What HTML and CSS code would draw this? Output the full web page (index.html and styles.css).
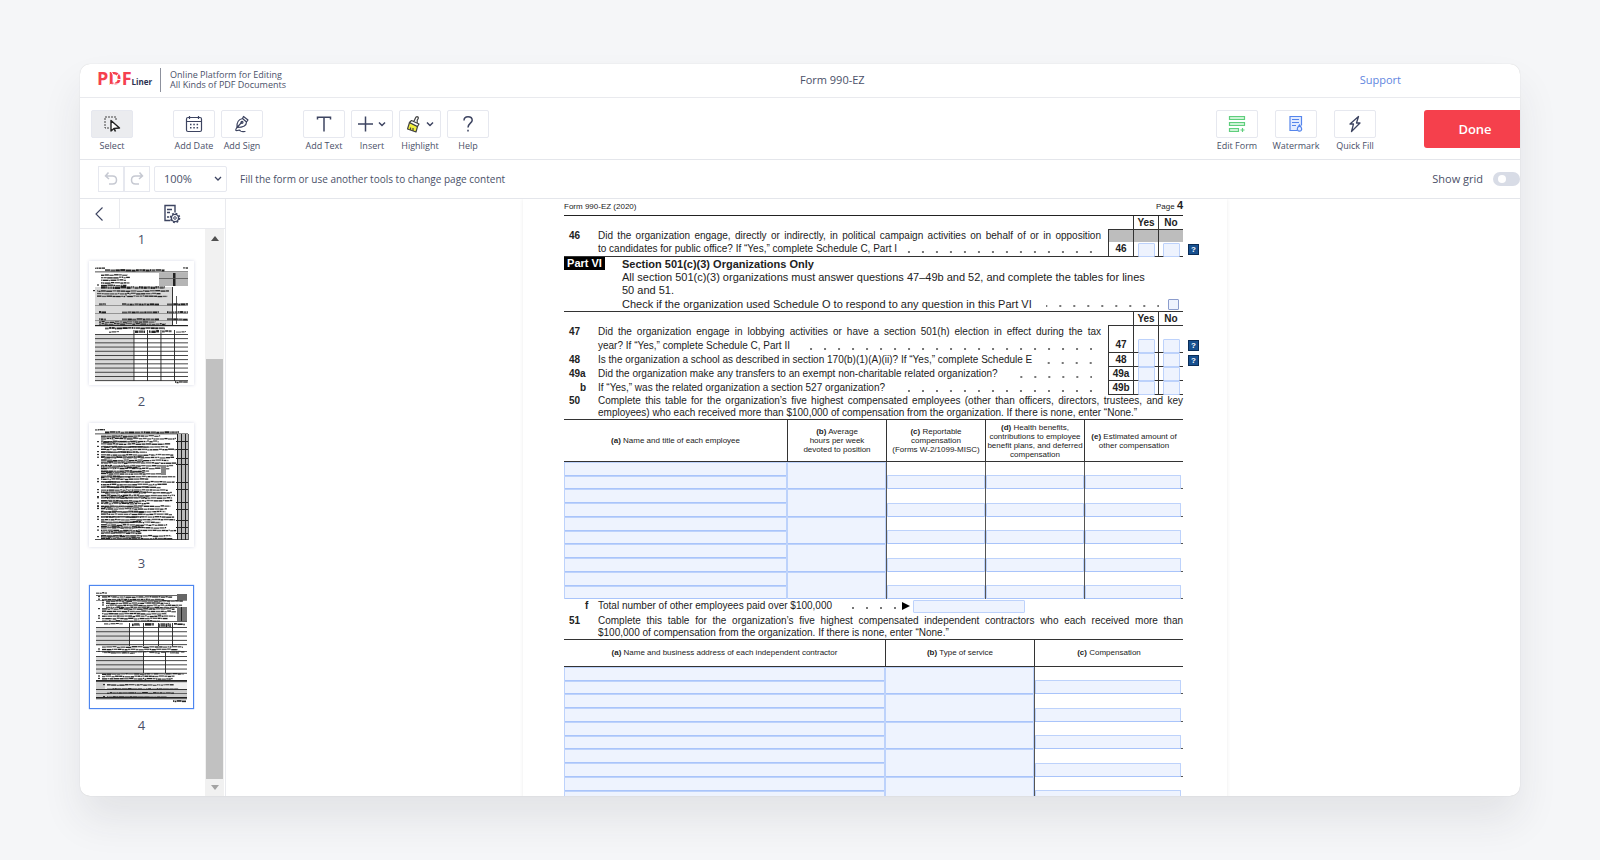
FILE: index.html
```html
<!doctype html>
<html lang="en">

<head>
    <meta charset="utf-8">
    <title>Form 990-EZ</title>
    <link rel="stylesheet" href="styles.css">
</head>

<body>
    <div class="window">
        <!-- header -->
        <header class="header">
            <div class="brand">
                <a class="logo" href="#">
                    <span class="logo-pdf">PDF<svg class="logo-mark" viewBox="0 0 14 16"><path d="M2 0 L6.500 8 L4 16 M14 9 L6.500 8 M13.500 12.500 L1 13.500 M9.500 2.500 L6.500 8" stroke="#fff" stroke-width="1" fill="none"/></svg></span><span class="logo-liner">Liner</span>
                </a>
                <p class="tagline">Online Platform for Editing<br>All Kinds of PDF Documents</p>
            </div>
            <div class="header-right">
                <span class="doc-title">Form 990-EZ</span>
                <a class="support" href="#">Support</a>
            </div>
        </header>

        <!-- toolbar -->
        <div class="toolbar">
            <div class="group">
                <button class="tool active"><span class="tool-box">
                    <svg width="18" height="18" viewBox="0 0 18 18"><path d="M6 13H2V2h11v3" fill="none" stroke="#444" stroke-width="1" stroke-dasharray="2 1"/><path d="M8 5.500v10.500l3-2.500 5.500-.5z" fill="#fff" stroke="#222" stroke-width="1.400" stroke-linejoin="round"/><path d="M11 13.500l1.500 3" stroke="#222" stroke-width="1.600"/></svg>
                </span>Select</button>
            </div>
            <div class="group">
                <button class="tool"><span class="tool-box">
                    <svg width="18" height="18" viewBox="0 0 18 18" fill="none" stroke="#3d4461" stroke-width="1.200"><rect x="1.500" y="2.500" width="15" height="14" rx="1.500"/><path d="M1.500 6.500h15M4.500 1v3M13.500 1v3"/><path d="M5 9.500h1.500M8.300 9.500h1.500M11.600 9.500h1.500M5 12.800h1.500M8.300 12.800h1.500M11.600 12.800h1.500" stroke-width="1.500"/></svg>
                </span>Add Date</button>
                <button class="tool"><span class="tool-box">
                    <svg width="18" height="18" viewBox="0 0 18 18" fill="none" stroke="#3d4461" stroke-width="1.200" stroke-linejoin="round" stroke-linecap="round"><path d="M4 12.500C3.500 8 5.500 4.500 9.500 3.500l4 3.500c0 3.500-3.500 5.500-9.500 5.500zM9.500 3.500L10.500 1.500l4.500 3.500-1.500 2M4 12.500l4.500-5"/><circle cx="9" cy="7.300" r="1"/><path d="M4 12.500c-1.500 2-2 3.500.5 3 1.500-.5 2.500-.5 3 .5.500.8 2 .5 4.500.5"/></svg>
                </span>Add Sign</button>
            </div>
            <div class="group">
                <button class="tool"><span class="tool-box">
                    <svg width="18" height="18" viewBox="0 0 18 18"><path d="M2.500 4.500V2.200h13v2.300M9 2.200v14.300" fill="none" stroke="#3d4461" stroke-width="1.500"/></svg>
                </span>Add Text</button>
                <button class="tool"><span class="tool-box">
                    <svg width="30" height="18" viewBox="0 0 30 18" fill="none" stroke="#3d4461" stroke-width="1.500"><path d="M1 9h15M8.500 1.500v15M22 7.500l3 3 3-3"/></svg>
                </span>Insert</button>
                <button class="tool"><span class="tool-box">
                    <svg width="30" height="18" viewBox="0 0 30 18" fill="none" stroke="#444" stroke-width="1.200" stroke-linejoin="round"><path d="M4.500 7.500L2.500 14l8.500 3 1.500-5.500z" fill="#f2ef3c"/><path d="M4.500 7.500l2-2 7.500 3.500-1.500 2.500z" fill="#fff"/><path d="M8.500 6c2-.5 1-4 3.500-4.300 2 0 1.500 1.800.5 3-.8 1.200.2 2.300-.5 3.300M5.500 15v-2.500M8 16v-3"/><path d="M22 7.500l3 3 3-3" stroke="#3d4461" stroke-width="1.500"/></svg>
                </span>Highlight</button>
                <button class="tool"><span class="tool-box">
                    <svg width="18" height="18" viewBox="0 0 18 18" fill="none" stroke="#3d4461" stroke-width="1.500"><path d="M5 5.500C5 3 6.500 1.700 9 1.700S13.200 3.200 13.200 5.200C13.200 8 9 8.500 9 12.500"/><path d="M9 14.800v1.700"/></svg>
                </span>Help</button>
            </div>
            <div class="group group-right">
                <button class="tool"><span class="tool-box">
                    <svg width="18" height="18" viewBox="0 0 18 18" fill="#cdf3d6" stroke="#5fce7d" stroke-width="1.200"><path d="M1.500 1.500h15v3h-15zM1.500 7.500h15v3h-15zM1.500 13.500h9v3h-9z"/><path d="M14.500 13v4M12.500 15h4"/></svg>
                </span>Edit Form</button>
                <button class="tool"><span class="tool-box">
                    <svg width="18" height="18" viewBox="0 0 18 18" fill="#e3ecff" stroke="#5585ec" stroke-width="1.200"><path d="M10 15.500H3V1.500h11.500v9"/><path d="M5 4.500h7M5 7.500h7M5 10.500h4"/><path d="M12.500 10c1.500 1.800 2.200 2.800 2.200 4a2.200 2.200 0 0 1-4.400 0c0-1.200.7-2.200 2.200-4z"/></svg>
                </span>Watermark</button>
                <button class="tool"><span class="tool-box">
                    <svg width="18" height="18" viewBox="0 0 18 18"><path d="M12.500 1.500L4 9h3.500L5.500 16.500 14 8h-3.500z" fill="none" stroke="#3d4461" stroke-width="1.300" stroke-linejoin="round"/></svg>
                </span>Quick Fill</button>
            </div>
            <button class="done">Done</button>
        </div>

        <!-- second bar -->
        <div class="subbar">
            <div class="history">
                <button aria-label="Undo"><svg width="16" height="16" viewBox="0 0 16 16"><path d="M5.500 1.500L2.500 5l3.500 3M2.500 5h7c3 0 4 1.800 4 4s-1.200 4-4 4H6" fill="none" stroke="#c6c9d2" stroke-width="1.500"/></svg></button>
                <button aria-label="Redo"><svg width="16" height="16" viewBox="0 0 16 16"><path d="M10.500 1.500l3 3.500-3.500 3M13.500 5h-7c-3 0-4 1.800-4 4s1.200 4 4 4H10" fill="none" stroke="#c6c9d2" stroke-width="1.500"/></svg></button>
            </div>
            <div class="zoom">
                <select aria-label="Zoom"><option>100%</option></select>
                <svg width="8" height="6" viewBox="0 0 8 6"><path d="M1 1l3 3 3-3" fill="none" stroke="#3d4461" stroke-width="1.300"/></svg>
            </div>
            <p class="hint">Fill the form or use another tools to change page content</p>
            <label class="grid-label" for="grid">Show grid</label>
            <input class="toggle" type="checkbox" id="grid">
        </div>

        <div class="main">
            <!-- page thumbnails -->
            <aside class="sidebar">
                <div class="tabs">
                    <button class="tab-back" aria-label="Back"><svg width="10" height="16" viewBox="0 0 10 16"><path d="M8.500 1.500L2 8l6.500 6.500" fill="none" stroke="#3d4461" stroke-width="1.100"/></svg></button>
                    <button class="tab-pages" aria-label="Pages"><svg width="18" height="20" viewBox="0 0 18 20" fill="none" stroke="#3d4461" stroke-width="1.400"><path d="M7 16.500H2v-15h10v7M4 5.500h5M4 8.500h3M4 13h2"/><circle cx="12" cy="14" r="3.600"/><circle cx="12" cy="14" r="1.300" stroke-width="1"/><circle cx="12" cy="14" r="4.600" stroke-width="1.500" stroke-dasharray="1.800 1.810"/></svg></button>
                </div>
                <div class="pages">
                    <ol class="thumbs">
                        <li class="page-no">1</li>
                        <li><a class="thumb" href="#" aria-label="Page 2"><svg id="thumb2" viewBox="0 0 104 124"></svg></a><span class="page-no">2</span></li>
                        <li><a class="thumb" href="#" aria-label="Page 3"><svg id="thumb3" viewBox="0 0 104 124"></svg></a><span class="page-no">3</span></li>
                        <li><a class="thumb current" href="#" aria-label="Page 4"><svg id="thumb4" viewBox="0 0 104 124"></svg></a><span class="page-no">4</span></li>
                    </ol>
                    <div class="scroll">
                        <span class="arrow up"></span>
                        <span class="track"></span>
                        <span class="handle"></span>
                        <span class="arrow down"></span>
                    </div>
                </div>
            </aside>

            <!-- document -->
            <main class="viewer">
                <div class="page">
                    <div class="form-head"><span>Form 990-EZ (2020)</span><span>Page <b>4</b></span></div>

                    <table class="questions ruled">
                        <colgroup><col class="c-num"><col><col class="c-yn"><col class="c-yn"><col class="c-yn"></colgroup>
                        <tr class="yn-head"><td></td><td></td><td></td><th>Yes</th><th>No</th></tr>
                        <tr class="first"><th>46</th><td><div class="just">Did the organization engage, directly or indirectly, in political campaign activities on behalf of or in opposition</div></td><td class="box grey"></td><td class="box grey"></td><td class="box grey"></td></tr>
                        <tr class="last"><th></th><td><div class="lead">to candidates for public office? If “Yes,” complete Schedule C, Part I<i></i></div></td><th class="box">46</th><td class="box"><input aria-label="46 yes"></td><td class="box"><input aria-label="46 no"><button class="tip">?</button></td></tr>
                    </table>

                    <section class="part">
                        <span class="part-tag">Part VI</span>
                        <div class="part-body">
                            <h3>Section 501(c)(3) Organizations Only</h3>
                            <p>All section 501(c)(3) organizations must answer questions 47–49b and 52, and complete the tables for lines<br>50 and 51.</p>
                            <div class="lead"><label for="schedO">Check if the organization used Schedule O to respond to any question in this Part VI</label><i></i><input type="checkbox" id="schedO"></div>
                        </div>
                    </section>

                    <table class="questions">
                        <colgroup><col class="c-num"><col><col class="c-yn"><col class="c-yn"><col class="c-yn"></colgroup>
                        <tr class="yn-head"><td></td><td></td><td></td><th>Yes</th><th>No</th></tr>
                        <tr class="first"><th>47</th><td><div class="just">Did the organization engage in lobbying activities or have a section 501(h) election in effect during the tax</div></td><td class="box"></td><td class="box"></td><td class="box"></td></tr>
                        <tr class="last"><th></th><td><div class="lead">year? If “Yes,” complete Schedule C, Part II<i class="gap"></i></div></td><th class="box">47</th><td class="box"><input aria-label="47 yes"></td><td class="box"><input aria-label="47 no"><button class="tip">?</button></td></tr>
                        <tr><th>48</th><td><div class="lead">Is the organization a school as described in section 170(b)(1)(A)(ii)? If “Yes,” complete Schedule E<i class="gap"></i></div></td><th class="box">48</th><td class="box"><input aria-label="48 yes"></td><td class="box"><input aria-label="48 no"><button class="tip">?</button></td></tr>
                        <tr><th>49a</th><td><div class="lead">Did the organization make any transfers to an exempt non-charitable related organization?<i class="gap"></i></div></td><th class="box">49a</th><td class="box"><input aria-label="49a yes"></td><td class="box"><input aria-label="49a no"></td></tr>
                        <tr><th class="sub">b</th><td><div class="lead">If “Yes,” was the related organization a section 527 organization?<i class="gap"></i></div></td><th class="box">49b</th><td class="box"><input aria-label="49b yes"></td><td class="box"><input aria-label="49b no"></td></tr>
                    </table>

                    <div class="para">
                        <b>50</b>
                        <div>
                            <div class="just">Complete this table for the organization’s five highest compensated employees (other than officers, directors, trustees, and key</div>
                            <div>employees) who each received more than $100,000 of compensation from the organization. If there is none, enter “None.”</div>
                        </div>
                    </div>

                    <table class="entries employees">
                        <colgroup><col><col class="c-99"><col class="c-99"><col class="c-99"><col class="c-99"></colgroup>
                        <thead>
                            <tr>
                                <th><b>(a)</b> Name and title of each employee</th>
                                <th><b>(b)</b> Average<br>hours per week<br>devoted to position</th>
                                <th><b>(c)</b> Reportable<br>compensation<br>(Forms W-2/1099-MISC)</th>
                                <th><b>(d)</b> Health benefits,<br>contributions to employee<br>benefit plans, and deferred<br>compensation</th>
                                <th><b>(e)</b> Estimated amount of<br>other compensation</th>
                            </tr>
                        </thead>
                        <tbody data-cols="two,tall,low,low,low"></tbody>
                    </table>

                    <div class="para total">
                        <b class="sub">f</b>
                        <label for="others">Total number of other employees paid over $100,000</label>
                        <i></i><span class="pointer"></span>
                        <input id="others">
                    </div>

                    <div class="para">
                        <b>51</b>
                        <div>
                            <div class="just">Complete this table for the organization’s five highest compensated independent contractors who each received more than</div>
                            <div>$100,000 of compensation from the organization. If there is none, enter “None.”</div>
                        </div>
                    </div>

                    <table class="entries contractors">
                        <colgroup><col><col class="c-149"><col class="c-149"></colgroup>
                        <thead>
                            <tr>
                                <th><b>(a)</b> Name and business address of each independent contractor</th>
                                <th><b>(b)</b> Type of service</th>
                                <th><b>(c)</b> Compensation</th>
                            </tr>
                        </thead>
                        <tbody data-cols="two,tall,low"></tbody>
                    </table>
                </div>
            </main>
        </div>
    </div>
    <script src="script.js"></script>
</body>

</html>
```
FILE: styles.css
```css
* {
    box-sizing: border-box;
}

body {
    margin: 0;
    padding: 64px 80px;
    background: #f5f6f8;
    font-family: "Open Sans", "Noto Sans", sans-serif;
    color: #4a5068;
}

button {
    font-family: inherit;
    color: inherit;
    padding: 0;
    border: 0;
    background: none;
}

p {
    margin: 0;
}

.window {
    display: flex;
    flex-direction: column;
    height: calc(100vh - 128px);
    border-radius: 10px;
    background: #fff;
    overflow: hidden;
    box-shadow: 0 0 1px rgba(0, 0, 0, 0.2), 0 24px 40px rgba(40, 45, 60, 0.09);
}

/* header */
.header {
    display: grid;
    grid-template-columns: 1fr 1fr;
    align-items: center;
    flex: none;
    height: 34px;
    padding-bottom: 2px;
    border-bottom: 1px solid #e9eaee;
}

.brand {
    display: flex;
    align-items: center;
    padding-left: 17px;
}

.logo {
    display: flex;
    align-items: baseline;
    line-height: 20px;
    padding-right: 8px;
    border-right: 1px solid #8d919d;
    text-decoration: none;
}

.logo-pdf {
    position: relative;
    font-size: 18px;
    font-weight: 700;
    color: #f5404e;
}

.logo-mark {
    position: absolute;
    left: 12px;
    top: 3px;
    width: 14px;
    height: 16px;
}

.logo-liner {
    font-size: 8px;
    font-weight: 700;
    color: #2b3150;
}

.tagline {
    padding-left: 9px;
    font-size: 9px;
    line-height: 10px;
}

.header-right {
    display: flex;
    justify-content: space-between;
    padding-right: 119px;
    font-size: 11px;
    line-height: 16px;
}

.support {
    color: #5f86e0;
    text-decoration: none;
}

/* toolbar */
.toolbar {
    display: flex;
    align-items: flex-start;
    gap: 40px;
    flex: none;
    height: 62px;
    padding: 12px 0 0 11px;
    border-bottom: 1px solid #e4e6eb;
}

.group {
    display: flex;
    gap: 6px;
}

.group-right {
    gap: 17px;
    margin-left: auto;
    margin-right: 8px;
}

.tool {
    display: flex;
    flex-direction: column;
    align-items: center;
    width: 42px;
    font-size: 9px;
    line-height: 16px;
    white-space: nowrap;
}

.tool-box {
    display: flex;
    align-items: center;
    justify-content: center;
    width: 42px;
    height: 28px;
    border: 1px solid #e6e8ef;
    border-radius: 2px;
}

.active .tool-box {
    background: #ebecef;
}

.done {
    width: 102px;
    height: 38px;
    margin-right: -6px;
    border-radius: 3px;
    background: #f5404c;
    color: #fff;
    font-size: 13px;
    font-weight: 600;
}

/* second bar */
.subbar {
    display: flex;
    align-items: center;
    flex: none;
    height: 39px;
    padding: 0 0 1px 18px;
    border-bottom: 1px solid #e4e6eb;
    font-size: 11px;
}

.history {
    display: flex;
}

.history button {
    display: flex;
    align-items: center;
    justify-content: center;
    width: 26px;
    height: 26px;
    border: 1px solid #e6e8ef;
}

.zoom {
    position: relative;
    margin: 0 13px 0 4px;
}

.zoom select {
    appearance: none;
    display: block;
    width: 73px;
    height: 26px;
    padding: 0 9px;
    border: 1px solid #e6e8ef;
    border-radius: 2px;
    background: none;
    font: inherit;
    color: inherit;
}

.zoom svg {
    position: absolute;
    right: 5px;
    top: 10px;
}

.hint {
    font-size: 10px;
}

.grid-label {
    margin-left: auto;
    margin-right: 10px;
}

.toggle {
    appearance: none;
    width: 27px;
    height: 14px;
    margin: 0;
    padding: 3px 5px;
    border-radius: 7px;
    background: #d8dce6;
}

.toggle::before {
    content: "";
    display: block;
    width: 8px;
    height: 8px;
    border-radius: 50%;
    background: #fff;
}

/* sidebar */
.main {
    display: flex;
    flex: 1;
    min-height: 0;
}

.sidebar {
    display: flex;
    flex-direction: column;
    flex: none;
    width: 146px;
    border-right: 1px solid #e9eaee;
}

.tabs {
    display: flex;
    flex: none;
    height: 30px;
    border-bottom: 1px solid #e9eaee;
}

.tab-back {
    width: 40px;
    padding-right: 2px;
    border-right: 1px solid #e9eaee;
}

.tab-back svg,
.tab-pages svg {
    display: block;
    margin: auto;
}

.tab-pages {
    flex: 1;
    padding-right: 2px;
}

.pages {
    display: flex;
    flex: 1;
    min-height: 0;
}

.thumbs {
    flex: 1;
    margin: 0;
    padding: 0 11px 0 9px;
    list-style: none;
    overflow: hidden;
}

.page-no {
    display: block;
    padding: 1px 0 13px;
    font-size: 13px;
    line-height: 18px;
    text-align: center;
}

li .page-no {
    padding: 7px 0 13px;
}

.thumb {
    display: block;
    height: 124px;
    box-shadow: 0 0 3px rgba(90, 100, 160, 0.25);
}

.thumb svg {
    display: block;
    height: 124px;
}

.current {
    box-shadow: inset 0 0 0 1px #4d86f0, 0 0 1px #4d86f0;
}

.scroll {
    display: flex;
    flex-direction: column;
    align-items: center;
    width: 19px;
    margin-right: 1px;
    background: #f1f1f1;
}

.arrow {
    flex: none;
    width: 0;
    height: 12px;
    border: 4px solid transparent;
}

.up {
    border-bottom: 5px solid #505050;
    border-top-width: 7px;
}

.down {
    border-top: 5px solid #a3a3a3;
    border-bottom-width: 6px;
    margin-top: 6px;
    height: 11px;
}

.track {
    flex: 118;
}

.handle {
    flex: 420;
    width: 17px;
    background: #c1c1c1;
}

/* document */
.viewer {
    flex: 1;
    overflow: hidden;
    padding-left: 4px;
}

.page {
    width: 704px;
    margin: 0 auto;
    padding: 0 44px 40px 41px;
    box-shadow: 0 0 4px rgba(0, 0, 0, 0.08);
    font-family: "Liberation Sans", Arial, sans-serif;
    font-size: 10px;
    line-height: 12px;
    color: #222;
    white-space: nowrap;
}

.form-head {
    display: flex;
    justify-content: space-between;
    height: 17px;
    border-bottom: 1px solid #222;
    font-size: 8px;
    line-height: 16px;
}

.form-head b {
    font-size: 11px;
    line-height: 12px;
}

.page table {
    width: 100%;
    table-layout: fixed;
    border-spacing: 0;
}

.page td,
.page th {
    padding: 0;
    text-align: center;
}

.page input {
    display: block;
    width: 100%;
    height: 100%;
    margin: 0;
    padding: 0;
    border: 1px solid #bdd2fb;
    border-radius: 1px;
    background: #eef3fe;
}

.c-num {
    width: 34px;
}

.c-yn {
    width: 25px;
}

.questions td:nth-child(2) {
    text-align: left;
    padding-right: 7px;
}

.questions th:first-child {
    text-align: left;
    padding-left: 5px;
}

.questions th.sub:first-child {
    padding-left: 16px;
}

.questions tr {
    height: 14px;
}

.questions .first {
    height: 12px;
}

.questions .last {
    height: 15px;
}

.yn-head th {
    border-left: 1px solid #333;
    border-bottom: 1px solid #333;
    line-height: 13px;
}

.yn-head td:nth-child(3) {
    border-bottom: 1px solid #333;
}

.box {
    position: relative;
    height: 14px;
    border-left: 1px solid #333;
    border-bottom: 1px solid #333;
}

.first .box {
    height: 12px;
    border-bottom: 0;
}

.questions .grey {
    background: #bdbdbd;
}

.page .box input {
    width: 17px;
    height: 14px;
    margin: 0 auto -1px;
}

.ruled .last td,
.ruled .last th {
    border-bottom: 1px solid #333;
}

.tip {
    position: absolute;
    left: 29px;
    top: 2px;
    width: 11px;
    height: 11px;
    background: #17508f;
    border: 1px solid #0a2c57;
    color: #fff;
    font-size: 8px;
    font-weight: 700;
    line-height: 9px;
}

.just {
    text-align: justify;
    text-align-last: justify;
}

.lead {
    display: flex;
}

/* dot leaders */
.page i {
    flex: 1;
    height: 12px;
    margin: 0 9px 0 5px;
    background: radial-gradient(circle at 13px 9px, #777 0, #777 1px, transparent 1px) right top / 14px 12px repeat-x;
}

.page .gap {
    margin-left: 12px;
}

.part {
    display: flex;
    align-items: flex-start;
    border-bottom: 1px solid #333;
    font-size: 11px;
    line-height: 13px;
}

.part-tag {
    width: 41px;
    margin-right: 17px;
    background: #000;
    color: #fff;
    font-weight: 700;
    text-align: center;
}

.part-body {
    flex: 1;
}

.part h3 {
    margin: 0;
    font-size: 11px;
    line-height: 14px;
}

.part .lead {
    line-height: 14px;
}

.part .lead i {
    margin-left: 14px;
}

.page .part .lead input {
    appearance: none;
    width: 11px;
    height: 11px;
    margin: 2px 4px 0 0;
    border: 1px solid #8b9ccc;
}

.para {
    display: flex;
}

.para > b {
    width: 34px;
    padding-left: 5px;
}

.para > b.sub {
    padding-left: 21px;
}

.para > div {
    flex: 1;
}

/* tables to fill in */
.entries th {
    height: 43px;
    border: 1px solid #333;
    border-width: 1px 0 1px 1px;
    font-size: 8px;
    font-weight: 400;
    line-height: 9px;
}

.entries th:first-child {
    border-left: 0;
}

.contractors th {
    height: 28px;
}

.page .contractors th {
    padding-bottom: 2px;
}

.c-99 {
    width: 99px;
}

.c-149 {
    width: 149px;
}

.cell {
    display: flex;
    flex-direction: column;
    justify-content: flex-end;
    height: 27px;
}

tr:nth-child(even) .cell {
    height: 28px;
}

.page .cell input {
    flex: 1;
    min-height: 0;
    border-bottom-color: #a9c4fa;
}

.page .low input {
    flex: none;
    height: 14px;
}

.low {
    border-left: 1px solid #555;
}

.low:last-child {
    background: linear-gradient(#555, #555) bottom / 100% 1px no-repeat;
}

.low:last-child .cell {
    padding-right: 2px;
}

.total {
    line-height: 14px;
    padding-bottom: 2px;
    height: 16px;
}

.page .total i {
    flex: none;
    width: 50px;
    margin: 0 6px 0 auto;
}

.pointer {
    margin: 3px 3px 0 0;
    border: 4px solid transparent;
    border-left: 8px solid #000;
    border-right: 0;
    height: 8px;
}

.page .total input {
    width: 112px;
    height: 13px;
    margin: 1px 158px 0 0;
}
```
FILE: script.js
```js
// rows of the two tables
document.querySelectorAll('tbody[data-cols]').forEach(function (body) {
    const cols = body.dataset.cols.split(',');
    for (let r = 1; r < 6; r++) {
        const tr = document.createElement('tr');
        cols.forEach(function (kind, c) {
            const field = '<input aria-label="Row ' + r + ' column ' + (c + 1) + '">';
            tr.innerHTML += '<td class="' + kind + '"><div class="cell">' + field + (kind === 'two' ? field : '') + '</div></td>';
        });
        body.appendChild(tr);
    }
});

// page thumbnails
let seed = 7;
function rnd() {
    seed = (seed * 16807) % 2147483647;
    return seed / 2147483647;
}

function rect(x, y, w, h, fill) {
    return '<rect x="' + x + '" y="' + y + '" width="' + w + '" height="' + h + '" fill="' + fill + '"/>';
}

function words(x1, x2, y, h) {
    let out = '';
    for (let x = x1; x < x2;) {
        const w = Math.min(1 + rnd() * 5, x2 - x);
        out += rect(x, y + rnd() * 0.7, w, h || 1.3, rnd() > 0.5 ? '#222' : '#555');
        x += w + 0.4;
    }
    return out;
}

function text(x1, x2, y1, y2, step) {
    let out = '';
    for (let y = y1; y < y2; y += step) {
        out += words(x1, x2 - rnd() * rnd() * (x2 - x1) * 0.5, y);
        if (rnd() > 0.5) out += rect(x1 - 4, y, 2, 1.2, '#333');
    }
    return out;
}

function table(y1, y2, xs, step, left, right) {
    let out = rect(left, y1, xs[0] - left, y2 - y1, '#d9d9d9');
    for (let y = y1; y <= y2; y += step) out += rect(left, y, right - left, 0.9, '#333');
    xs.forEach(function (x) { out += rect(x, y1 - 4, 0.9, y2 - y1 + 4, '#222'); });
    return out;
}

document.getElementById('thumb2').innerHTML =
    words(6, 16, 6) + words(16, 76, 8, 2) + words(94, 99, 6) + rect(6, 10.5, 93, 0.8, '#222') +
    text(12, 42, 13, 24, 2.6) + rect(70, 12, 29, 13, '#b5b5b5') + rect(84, 12, 2.5, 13, '#222') + rect(70, 17, 29, 0.8, '#555') +
    rect(6, 26, 78, 38, '#d9d9d9') + words(12, 76, 25, 2.4) + text(8, 80, 29, 35, 2.6) +
    [42, 50, 57].map(function (y) { return words(10, 17, y, 2) + words(33, 70, y, 2) + words(78, 99, y, 2) + rect(6, y + 2, 93, 0.6, '#666'); }).join('') +
    rect(83, 26, 1, 38, '#333') + rect(87, 35, 0.8, 28, '#333') + text(10, 80, 60, 64, 2) +
    rect(6, 64, 93, 1.2, '#222') + words(16, 76, 66, 1.8) + words(20, 30, 70, 1) + words(46, 56, 69, 2.4) + words(60, 70, 69, 2.4) + words(73, 83, 69, 2) + words(87, 97, 70, 1) +
    table(73, 120, [44.5, 58, 71.5, 85], 4.2, 6, 99) + words(86, 99, 120, 1.6);

document.getElementById('thumb3').innerHTML =
    words(6, 16, 6) + words(16, 90, 8, 2) + rect(6, 10.5, 93, 0.8, '#222') +
    rect(88, 11, 11, 105, '#bbb') + text(12, 88, 12, 116, 2.7) + text(12, 60, 13, 115, 5) +
    rect(88, 11, 1, 106, '#222') + rect(92, 11, 1, 106, '#222') + rect(96, 11, 1, 106, '#222') + rect(99, 11, 0.7, 106, '#222') +
    [18, 26, 35, 41, 59, 66, 79, 86, 97, 104, 110].map(function (y) { return rect(87, y, 12, 1, '#222'); }).join('') +
    rect(72, 42, 5, 10, '#888') + rect(6, 116, 93, 0.8, '#222');

document.getElementById('thumb4').innerHTML =
    words(7, 18, 7) + rect(7, 10, 91, 0.7, '#222') + text(13, 86, 11, 15, 2.6) + rect(7, 15, 91, 0.6, '#444') +
    text(17, 94, 15, 22, 2.2) + text(13, 88, 23, 36, 2.4) +
    rect(88, 9, 10, 6, '#666') + rect(88, 22, 10, 14, '#777') + rect(92, 22, 0.8, 14, '#111') +
    words(15, 34, 38, 1) + words(43, 51, 38, 2.5) + words(56, 65, 38, 2.5) + words(70, 82, 38, 3.5) + words(85, 96, 38, 1.6) +
    rect(7, 36, 91, 0.8, '#333') + table(42, 61, [40, 54, 69, 83], 4.3, 7, 98) +
    text(13, 96, 61, 66, 2.4) + rect(7, 66, 91, 0.8, '#333') + words(15, 46, 67, 1) + words(61, 71, 67, 1) + words(81, 90, 67, 1) +
    table(71, 88, [54, 76], 4.2, 7, 98) + text(13, 96, 88, 94, 2.4) + rect(7, 95, 91, 1.8, '#222') +
    rect(7, 97, 91, 18, '#ccc') + rect(16, 98, 82, 6, '#eee') + text(18, 90, 99, 113, 4) +
    rect(7, 104, 91, 1, '#333') + rect(7, 108, 91, 0.7, '#333') + rect(7, 112, 91, 1.6, '#222') + words(84, 97, 115, 1.6);
```
